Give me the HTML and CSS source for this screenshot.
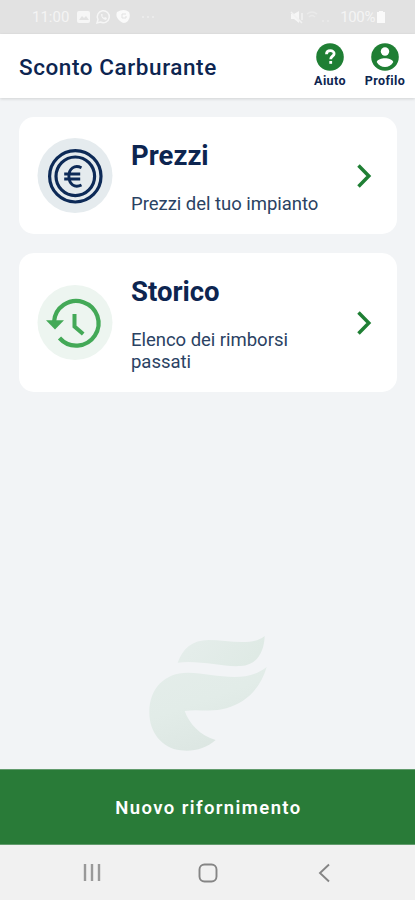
FILE: index.html
```html
<!DOCTYPE html>
<html lang="it">
<head>
<meta charset="utf-8">
<meta name="viewport" content="width=device-width, initial-scale=1">
<title>Sconto Carburante</title>
<link rel="stylesheet" href="styles.css">
</head>
<body>
<div class="app">
  <div class="status">
    <span class="time">11:00</span>
    <svg class="notifications" width="80" height="16" viewBox="0 0 80 16">
      <rect x="1" y="2" width="13" height="12" rx="2" fill="#f6f6f6"/>
      <path d="M3 11l3-4 2 2 2-2 3 4z" fill="#e2e2e2"/>
      <path d="M21 14l1-3.500a6 6 0 1 1 2.500 2.500z" fill="none" stroke="#f6f6f6" stroke-width="1.500"/>
      <path d="M25 5q0 5 5 6l1-2-2-1-1 1-2-2 1-1-1-1z" fill="#f6f6f6"/>
      <path d="M41 3q7-4 12 0 2 5-1 9-4 4-8 0-5-4-3-9z" fill="#fafafa"/>
      <path d="M50 5h-4v4h4V7" fill="none" stroke="#e2e2e2"/>
      <g fill="#eeeeee"><circle cx="67" cy="8" r="1"/><circle cx="72" cy="8" r="1"/><circle cx="77" cy="8" r="1"/></g>
    </svg>
    <svg class="signal" width="46" height="16" viewBox="0 0 46 16">
      <path d="M1 5h3l5-3v12l-5-4H1z" fill="#f6f6f6"/>
      <path d="M1 3l11 11M12 4v7" stroke="#f2f2f2" stroke-width="1.500"/>
      <path d="M17 5q5-4 10 0M19 8q3-3 6 0M32 12h2m3 0h2" fill="none" stroke="#eaeaea" stroke-width="1.500"/>
    </svg>
    <span class="battery-text">100%</span>
    <svg width="10" height="14" viewBox="0 0 10 14"><path d="M3 1h4v1h2v11H1V2h2z" fill="#fafafa"/></svg>
  </div>

  <header class="header">
    <h1 class="title">Sconto Carburante</h1>
    <a class="action help">
      <svg width="28" height="28" viewBox="0 0 28 28">
        <circle cx="14" cy="14" r="13.800" fill="#1f7f34"/>
        <path d="M10.500 11.300c0-4.900 7.900-4.500 7.600-.5-.2 2.300-3.400 2.500-3.400 5.400" fill="none" stroke="#fff" stroke-width="2.800"/>
        <rect x="13.300" y="18" width="2.800" height="2.800" fill="#fff"/>
      </svg>
      <span>Aiuto</span>
    </a>
    <a class="action profile">
      <svg width="28" height="28" viewBox="0 0 28 28">
        <circle cx="14" cy="14" r="13.800" fill="#1f7f34"/>
        <circle cx="14" cy="8.500" r="4.200" fill="#fff"/>
        <path d="M5.700 19c2-5 14.600-5 16.600 0-3.500 6.600-13.100 6.600-16.600 0z" fill="#fff"/>
      </svg>
      <span>Profilo</span>
    </a>
  </header>

  <main class="content">
    <section class="card prices">
      <svg class="card-icon" width="76" height="76" viewBox="0 0 76 76">
        <circle cx="38" cy="37.500" r="37.500" fill="#e5ebee"/>
        <g fill="none" stroke="#0d2a57">
          <circle cx="38.300" cy="38.300" r="25.700" stroke-width="3.200"/>
          <circle cx="38.300" cy="38.300" r="19.300" stroke-width="3.200"/>
          <path d="M44.500 29.700c-7-3.200-12.600.7-12.600 8.600s5.600 12 12.600 8.700M27.200 36h16M27.200 41h16" stroke-width="2.900"/>
        </g>
      </svg>
      <div class="card-text">
        <h2>Prezzi</h2>
        <p>Prezzi del tuo impianto</p>
      </div>
      <svg class="chevron" width="16" height="26" viewBox="0 0 16 26"><path d="M2.500 2.500L12.800 13 2.500 23.500" fill="none" stroke="#1f7f34" stroke-width="3.500"/></svg>
    </section>

    <section class="card history">
      <svg class="card-icon" width="76" height="76" viewBox="0 0 76 76">
        <circle cx="38" cy="37.500" r="37.500" fill="#edf5f0"/>
        <path d="M17 37A22.300 22.300 0 1 1 22.500 53" fill="none" stroke="#43a957" stroke-width="4.200"/>
        <path d="M9 35.300h18l-9 9.200z" fill="#43a957"/>
        <path d="M37.500 29v12.500l8.700 7.500" fill="none" stroke="#43a957" stroke-width="4"/>
      </svg>
      <div class="card-text">
        <h2>Storico</h2>
        <p>Elenco dei rimborsi passati</p>
      </div>
      <svg class="chevron" width="16" height="26" viewBox="0 0 16 26"><path d="M2.500 2.500L12.800 13 2.500 23.500" fill="none" stroke="#1f7f34" stroke-width="3.500"/></svg>
    </section>

    <svg class="logo" width="124" height="120" viewBox="50 40 372 360">
      <defs>
        <linearGradient id="leaf" x1="0" y1="0" x2="1" y2="0.300">
          <stop offset="0" stop-color="#e6eeec"/>
          <stop offset="1" stop-color="#dfeae5"/>
        </linearGradient>
        <linearGradient id="body" x1="0" y1="0" x2="0.500" y2="1">
          <stop offset="0" stop-color="#e4edea"/>
          <stop offset="0.500" stop-color="#e2ece8"/>
          <stop offset="1" stop-color="#dce6e2"/>
        </linearGradient>
      </defs>
      <path d="M142 126C157 84 186 58 235 58C290 58 365 78 403 46C402 89 383 134 331 136C278 140 211 118 142 126Z" fill="url(#leaf)"/>
      <path d="M409 139C391 202 348 247 288 263C244 276 203 264 163 271C178 311 210 345 256 358C227 383 190 394 151 389C94 382 57 334 57 276C56 204 103 155 174 156C249 157 341 193 409 139Z" fill="url(#body)"/>
    </svg>
  </main>

  <button class="primary">Nuovo rifornimento</button>

  <nav class="navbar">
    <svg width="20" height="20" viewBox="0 0 20 20"><path d="M3 1v17M10 1v17M17 1v17" stroke="#999" stroke-width="2.400"/></svg>
    <svg width="20" height="20" viewBox="0 0 20 20"><rect x="1.500" y="1.500" width="17" height="17" rx="5" fill="none" stroke="#858585" stroke-width="1.900"/></svg>
    <svg width="20" height="20" viewBox="0 0 20 20"><path d="M15 1.500L6 10l9 8.500" fill="none" stroke="#858585" stroke-width="1.900"/></svg>
  </nav>
</div>
</body>
</html>
```
FILE: styles.css
```css
* {
  box-sizing: border-box;
}

body {
  margin: 0;
  font-family: Roboto, "Liberation Sans", sans-serif;
  color: #0d2550;
}

svg {
  display: block;
  flex: none;
}

h1, h2, p {
  margin: 0;
}

.app {
  display: flex;
  flex-direction: column;
  width: 415px;
  height: 900px;
  overflow: hidden;
  background: #f2f4f6;
}

.status {
  display: flex;
  align-items: center;
  flex: none;
  height: 34px;
  padding: 0 29px 0 32px;
  background: #e2e2e2;
  color: #f4f4f4;
  font-size: 15px;
}

.time {
  width: 44px;
}

.signal {
  margin-left: auto;
  margin-right: 4px;
}

.battery-text {
  margin-right: 1px;
  letter-spacing: -0.4px;
}

.header {
  display: flex;
  flex: none;
  height: 64px;
  padding: 0 9px 0 19px;
  background: #fff;
  box-shadow: 0 1px 3px rgba(0, 0, 0, 0.14);
}

.title {
  flex: 1;
  font-size: 22.5px;
  font-weight: 500;
  line-height: 66px;
  letter-spacing: 0.58px;
  white-space: nowrap;
}

.action {
  display: flex;
  flex-direction: column;
  align-items: center;
  padding-top: 9px;
  font-size: 12.5px;
  font-weight: 700;
  line-height: 14px;
  letter-spacing: 0.4px;
}

.action span {
  margin-top: 3px;
}

.help {
  width: 34px;
  margin-right: 17px;
}

.profile {
  width: 42px;
}

.content {
  display: flex;
  flex-direction: column;
  flex: 1;
  padding: 19px 18px 0 19px;
}

.card {
  display: flex;
  align-items: center;
  flex: none;
  padding: 0 25px 0 18px;
  background: #fff;
  border-radius: 15px;
}

.prices {
  height: 117px;
}

.history {
  height: 139px;
  margin-top: 19px;
}

.card-text {
  flex: 1;
  align-self: flex-start;
  padding: 23px 20px 0 18px;
}

.card h2 {
  font-size: 27.5px;
  font-weight: 700;
  line-height: 32px;
  letter-spacing: 0;
}

.card p {
  margin-top: 21px;
  color: #2a4263;
  font-size: 18.5px;
  line-height: 22px;
  letter-spacing: -0.03px;
}

.logo {
  margin: auto 0 15px 128px;
}

.primary {
  flex: none;
  height: 76px;
  padding: 2px 0 0 2px;
  border: 0;
  border-top: 1px solid #629b6d;
  border-bottom: 1px solid #629b6d;
  background: #297b38;
  color: #fff;
  font-family: inherit;
  font-size: 18.5px;
  font-weight: 600;
  letter-spacing: 1.4px;
}

.navbar {
  display: flex;
  justify-content: space-between;
  flex: none;
  height: 55px;
  padding: 18px 81px 0 82px;
  background: #f1f1f1;
}
```
